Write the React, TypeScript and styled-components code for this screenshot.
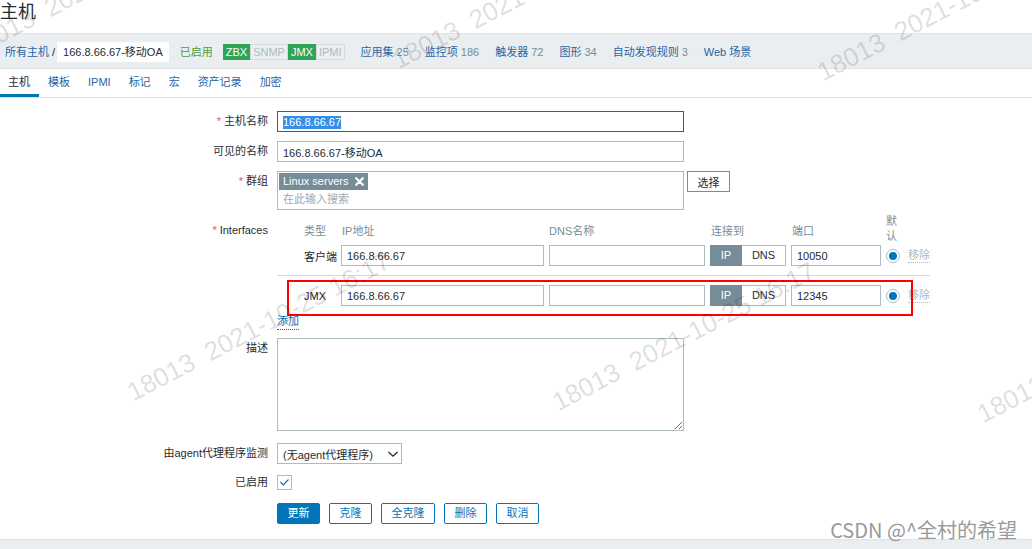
import React from "react";
import styled, { createGlobalStyle, css } from "styled-components";

const GlobalStyle = createGlobalStyle`
  html, body { margin: 0; padding: 0; background: #fff; }
  body {
    font-family: "Liberation Sans", Arial, "Noto Sans CJK SC", sans-serif;
    font-size: 11px;
    color: #1f2c33;
  }
  * { box-sizing: border-box; }
`;

const FONT = `"Liberation Sans", Arial, "Noto Sans CJK SC", sans-serif`;

const Page = styled.div`
  position: relative;
  width: 1032px;
  height: 549px;
  overflow: hidden;
  background: #fff;
  display: flex;
  flex-direction: column;
`;

const TitleBar = styled.header`
  height: 33px;
  flex: none;
`;

const Title = styled.h1`
  margin: 0;
  font-size: 18px;
  font-weight: normal;
  line-height: 25px;
  color: #1f2c33;
`;

const NavBar = styled.nav`
  flex: none;
  height: 36px;
  background: #ebeef0;
  border-top: 1px solid #dfe4e7;
  border-bottom: 1px solid #dfe4e7;
  display: flex;
  align-items: center;
  padding: 2px 0 0 5px;
  line-height: 20px;
  white-space: nowrap;
`;

const Crumb = styled.span`
  color: #1f65a6;
`;

const CrumbSep = styled.span`
  margin: 0 2px 0 3px;
  color: #1f2c33;
`;

const CrumbBox = styled.span`
  background: #fff;
  height: 20px;
  padding: 0 6px;
  color: #1f2c33;
`;

const Enabled = styled.span`
  margin-left: 11px;
  color: #4f9e3a;
`;

const StatusGroup = styled.span`
  margin-left: 10px;
  display: flex;
`;

const StatusTag = styled.span<{ $on: boolean }>`
  height: 16px;
  line-height: 14px;
  padding: 0 2px;
  border: 1px solid ${(p) => (p.$on ? "#2fa356" : "#d4dbdf")};
  background: ${(p) => (p.$on ? "#2fa356" : "#eceff1")};
  color: ${(p) => (p.$on ? "#fff" : "#acbbc2")};
`;

const Counters = styled.span`
  margin-left: 16px;
  display: flex;
  gap: 16px;
`;

const CounterLink = styled.span`
  color: #1f65a6;
`;

const CounterNum = styled.span`
  color: #768d99;
  margin-left: 3px;
`;

const TabList = styled.div`
  flex: none;
  display: flex;
  height: 29px;
  border-bottom: 1px solid #dfe4e7;
  margin-left: -1px;
`;

const Tab = styled.div<{ $active?: boolean }>`
  height: 28px;
  line-height: 26px;
  padding: 0 9px;
  border-bottom: 3px solid ${(p) => (p.$active ? "#0275b8" : "transparent")};
  color: ${(p) => (p.$active ? "#1f2c33" : "#1f65a6")};
`;

const Form = styled.div`
  padding-top: 13px;
  flex: 1;
`;

const FormRow = styled.div<{ $mt: number }>`
  display: grid;
  grid-template-columns: 268px 1fr;
  column-gap: 9px;
  align-items: start;
  margin-top: ${(p) => p.$mt}px;
`;

const Label = styled.div<{ $lh?: number }>`
  text-align: right;
  white-space: nowrap;
  line-height: ${(p) => p.$lh ?? 21}px;
  color: #1f2c33;
`;

const Req = styled.span`
  color: #e45959;
  margin-right: 3px;
`;

const fieldBox = css`
  height: 21px;
  border: 1px solid #acbbc2;
  background: #fff;
  font: 11px ${FONT};
  color: #1f2c33;
  padding: 0 5px;
  outline: none;
  display: block;
`;

const TextInput = styled.input<{ $w: number }>`
  ${fieldBox}
  width: ${(p) => p.$w}px;
`;

const FocusedInput = styled.div`
  ${fieldBox}
  width: 407px;
  border-color: #1f65a6;
  line-height: 19px;
`;

const Selected = styled.span`
  display: inline-block;
  line-height: 13px;
  background: #338fe8;
  color: #fff;
  vertical-align: middle;
`;

const FieldLine = styled.div`
  display: flex;
  align-items: flex-start;
  gap: 3px;
`;

const MultiSelect = styled.div`
  width: 407px;
  height: 39px;
  border: 1px solid #acbbc2;
  padding: 1px;
  background: #fff;
`;

const Chip = styled.span`
  display: inline-flex;
  align-items: center;
  height: 17px;
  line-height: 17px;
  padding: 0 4px;
  gap: 7px;
  background: #768d99;
  color: #fff;
`;

const Placeholder = styled.div`
  line-height: 16px;
  margin-top: 1px;
  padding-left: 4px;
  color: #a0aab0;
`;

const GreyButton = styled.button`
  height: 21px;
  width: 43px;
  border: 1px solid #768d99;
  background: #fff;
  color: #1f2c33;
  font: 11px ${FONT};
  padding: 0;
`;

const IfaceBlock = styled.div`
  width: 653px;
`;

const ifaceGrid = css`
  display: grid;
  grid-template-columns: 22px 32px 203px 156px 76px 90px 17px auto;
  column-gap: 5px;
  align-items: center;
`;

const IfaceHeader = styled.div`
  ${ifaceGrid}
  height: 30px;
  color: #768d99;
`;

const HeadCell = styled.div<{ $col: number; $pl?: number }>`
  grid-column: ${(p) => p.$col};
  padding-left: ${(p) => p.$pl ?? 0}px;
  white-space: nowrap;
`;

const TwoLine = styled.div`
  grid-column: 7;
  line-height: 15px;
  width: 12px;
  white-space: normal;
  word-break: break-all;
  margin-top: -2px;
`;

const IfaceRowWrap = styled.div`
  position: relative;
`;

const IfaceRow = styled.div`
  ${ifaceGrid}
  height: 21px;
`;

const TypeCell = styled.div`
  grid-column: 2;
  white-space: nowrap;
`;

const Toggle = styled.div`
  display: flex;
  height: 21px;
`;

const ToggleOpt = styled.span<{ $active?: boolean; $w: number }>`
  width: ${(p) => p.$w}px;
  height: 21px;
  line-height: 19px;
  text-align: center;
  border: 1px solid ${(p) => (p.$active ? "#768d99" : "#acbbc2")};
  border-left-width: ${(p) => (p.$active ? 1 : 0)}px;
  background: ${(p) => (p.$active ? "#768d99" : "#fff")};
  color: ${(p) => (p.$active ? "#fff" : "#1f2c33")};
`;

const Radio = styled.span`
  width: 14px;
  height: 14px;
  border-radius: 50%;
  border: 1px solid #acbbc2;
  background: #fff;
  display: flex;
  align-items: center;
  justify-content: center;
  &::after {
    content: "";
    width: 8px;
    height: 8px;
    border-radius: 50%;
    background: #0275b8;
  }
`;

const RemoveLink = styled.span`
  color: #acbbc2;
  border-bottom: 1px dotted #acbbc2;
  line-height: 13px;
  white-space: nowrap;
  justify-self: start;
`;

const Divider = styled.div`
  height: 1px;
  background: #d3dadd;
  margin: 9px 0;
`;

const Annotation = styled.div`
  position: absolute;
  left: 10px;
  top: -5px;
  width: 626px;
  height: 36px;
  border: 2px solid #ff0000;
  pointer-events: none;
`;

const AddLink = styled.span`
  display: inline-block;
  margin-top: 8px;
  line-height: 15px;
  color: #0275b8;
  border-bottom: 1px dotted #0275b8;
`;

const TextArea = styled.textarea`
  display: block;
  width: 407px;
  height: 93px;
  border: 1px solid #acbbc2;
  font: 11px ${FONT};
  padding: 3px 5px;
  outline: none;
  margin: 0;
`;

const SelectBox = styled.div`
  ${fieldBox}
  width: 125px;
  display: flex;
  align-items: center;
  justify-content: space-between;
  padding: 0 1px 0 5px;
`;

const CheckBox = styled.span`
  display: flex;
  width: 15px;
  height: 15px;
  border: 1px solid #acbbc2;
  background: #fff;
  align-items: center;
  justify-content: center;
`;

const ButtonRow = styled.div`
  display: flex;
  gap: 9px;
`;

const Button = styled.button<{ $primary?: boolean }>`
  height: 21px;
  padding: 0 9.5px;
  font: 11px ${FONT};
  border: 1px solid #0275b8;
  background: ${(p) => (p.$primary ? "#0275b8" : "#fff")};
  color: ${(p) => (p.$primary ? "#fff" : "#0275b8")};
  border-radius: 2px;
  line-height: 19px;
`;

const Footer = styled.footer`
  flex: none;
  height: 10px;
  background: #ebeef0;
  border-top: 1px solid #dfe4e7;
`;

const Watermark = styled.span<{ $x: number; $y: number }>`
  position: absolute;
  left: ${(p) => p.$x}px;
  top: ${(p) => p.$y - 21}px;
  font: 26px/26px "Liberation Sans", Arial, sans-serif;
  color: rgba(0, 0, 0, 0.14);
  white-space: pre;
  transform-origin: 0 100%;
  transform: rotate(-27.4deg);
  pointer-events: none;
`;

const CsdnMark = styled.span`
  position: absolute;
  right: 15px;
  top: 520px;
  font: 20px/20px "Noto Sans CJK SC", "Noto Sans", sans-serif;
  color: #9a9a9a;
  white-space: nowrap;
  pointer-events: none;
`;

const counters: { name: string; count?: string }[] = [
  { name: "应用集", count: "25" },
  { name: "监控项", count: "186" },
  { name: "触发器", count: "72" },
  { name: "图形", count: "34" },
  { name: "自动发现规则", count: "3" },
  { name: "Web 场景" },
];

const tabs = ["主机", "模板", "IPMI", "标记", "宏", "资产记录", "加密"];

const statuses = [
  { name: "ZBX", on: true },
  { name: "SNMP", on: false },
  { name: "JMX", on: true },
  { name: "IPMI", on: false },
];

const interfaces = [
  { type: "客户端", ip: "166.8.66.67", port: "10050" },
  { type: "JMX", ip: "166.8.66.67", port: "12345" },
];

const watermarks = [
  { x: -25, y: 56 },
  { x: 400, y: 68 },
  { x: 825, y: 80 },
  { x: 135, y: 400 },
  { x: 560, y: 410 },
  { x: 985, y: 422 },
];

const ChipClose = () => (
  <svg width="9" height="9" viewBox="0 0 9 9">
    <path d="M1.2 1.2 L7.8 7.8 M7.8 1.2 L1.2 7.8" stroke="#fff" strokeWidth="2.2" strokeLinecap="round" />
  </svg>
);

const Chevron = () => (
  <svg width="14" height="10" viewBox="0 0 14 10">
    <path d="M2.5 3 L7 7.2 L11.5 3" fill="none" stroke="#1f2c33" strokeWidth="1.3" />
  </svg>
);

const CheckMark = () => (
  <svg width="13" height="13" viewBox="0 0 13 13">
    <path d="M2.5 6 L5.3 9 L10.5 3.5" fill="none" stroke="#0275b8" strokeWidth="1.1" />
  </svg>
);

function InterfaceRow({ type, ip, port }: { type: string; ip: string; port: string }) {
  return (
    <IfaceRow>
      <TypeCell>{type}</TypeCell>
      <TextInput $w={203} defaultValue={ip} />
      <TextInput $w={156} defaultValue="" />
      <Toggle>
        <ToggleOpt $active $w={32}>IP</ToggleOpt>
        <ToggleOpt $w={44}>DNS</ToggleOpt>
      </Toggle>
      <TextInput $w={90} defaultValue={port} />
      <Radio />
      <RemoveLink>移除</RemoveLink>
    </IfaceRow>
  );
}

export default function App() {
  return (
    <Page>
      <GlobalStyle />
      <TitleBar>
        <Title>主机</Title>
      </TitleBar>
      <NavBar>
        <Crumb>所有主机</Crumb>
        <CrumbSep>/</CrumbSep>
        <CrumbBox>166.8.66.67-移动OA</CrumbBox>
        <Enabled>已启用</Enabled>
        <StatusGroup>
          {statuses.map((s) => (
            <StatusTag key={s.name} $on={s.on}>
              {s.name}
            </StatusTag>
          ))}
        </StatusGroup>
        <Counters>
          {counters.map((c) => (
            <span key={c.name}>
              <CounterLink>{c.name}</CounterLink>
              {c.count && <CounterNum>{c.count}</CounterNum>}
            </span>
          ))}
        </Counters>
      </NavBar>
      <TabList>
        {tabs.map((t, i) => (
          <Tab key={t} $active={i === 0}>
            {t}
          </Tab>
        ))}
      </TabList>
      <Form>
        <FormRow $mt={0}>
          <Label>
            <Req>*</Req>主机名称
          </Label>
          <FocusedInput>
            <Selected>166.8.66.67</Selected>
          </FocusedInput>
        </FormRow>
        <FormRow $mt={9}>
          <Label>可见的名称</Label>
          <TextInput $w={407} defaultValue="166.8.66.67-移动OA" />
        </FormRow>
        <FormRow $mt={9}>
          <Label>
            <Req>*</Req>群组
          </Label>
          <FieldLine>
            <MultiSelect>
              <Chip>
                Linux servers
                <ChipClose />
              </Chip>
              <Placeholder>在此输入搜索</Placeholder>
            </MultiSelect>
            <GreyButton>选择</GreyButton>
          </FieldLine>
        </FormRow>
        <FormRow $mt={5}>
          <Label $lh={30}>
            <Req>*</Req>Interfaces
          </Label>
          <IfaceBlock>
            <IfaceHeader>
              <HeadCell $col={2}>类型</HeadCell>
              <HeadCell $col={3} $pl={1}>IP地址</HeadCell>
              <HeadCell $col={4}>DNS名称</HeadCell>
              <HeadCell $col={5} $pl={1}>连接到</HeadCell>
              <HeadCell $col={6} $pl={1}>端口</HeadCell>
              <TwoLine>默认</TwoLine>
            </IfaceHeader>
            <InterfaceRow {...interfaces[0]} />
            <Divider />
            <IfaceRowWrap>
              <InterfaceRow {...interfaces[1]} />
              <Annotation />
            </IfaceRowWrap>
            <AddLink>添加</AddLink>
          </IfaceBlock>
        </FormRow>
        <FormRow $mt={8}>
          <Label>描述</Label>
          <TextArea defaultValue="" />
        </FormRow>
        <FormRow $mt={12}>
          <Label>由agent代理程序监测</Label>
          <SelectBox>
            <span>(无agent代理程序)</span>
            <Chevron />
          </SelectBox>
        </FormRow>
        <FormRow $mt={11}>
          <Label $lh={15}>已启用</Label>
          <CheckBox>
            <CheckMark />
          </CheckBox>
        </FormRow>
        <FormRow $mt={13}>
          <span />
          <ButtonRow>
            <Button $primary>更新</Button>
            <Button>克隆</Button>
            <Button>全克隆</Button>
            <Button>删除</Button>
            <Button>取消</Button>
          </ButtonRow>
        </FormRow>
      </Form>
      <Footer />
      {watermarks.map((w, i) => (
        <Watermark key={i} $x={w.x} $y={w.y}>
          {"18013  2021-10-25 16:17"}
        </Watermark>
      ))}
      <CsdnMark>CSDN @^全村的希望</CsdnMark>
    </Page>
  );
}
